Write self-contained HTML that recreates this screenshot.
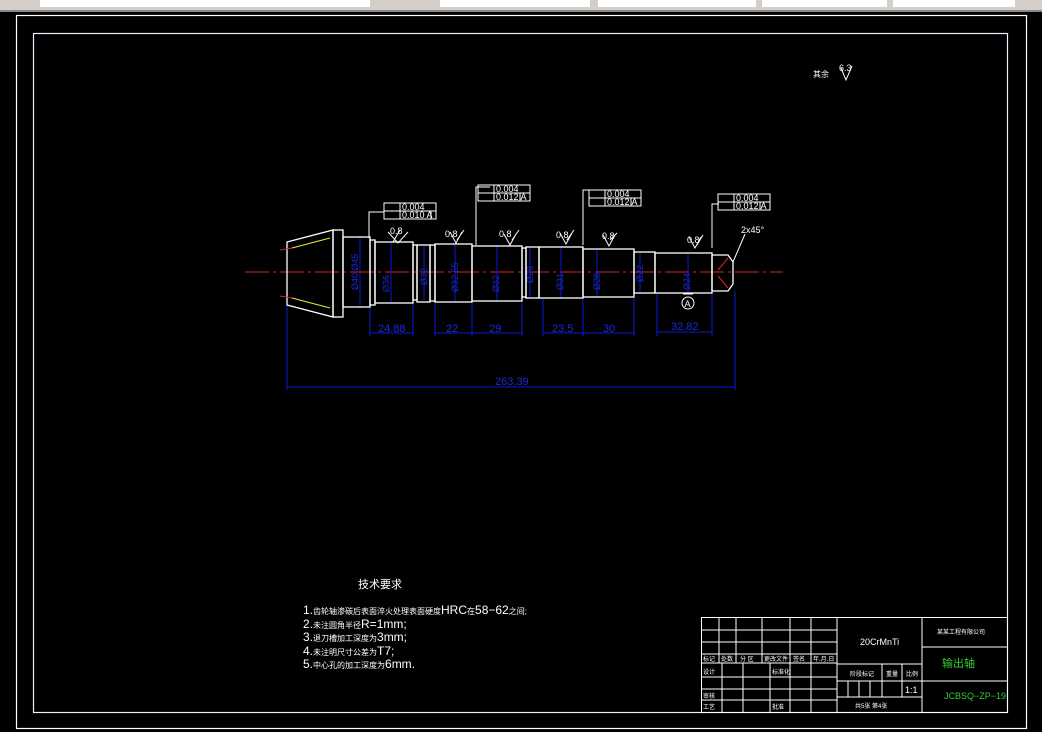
<!DOCTYPE html>
<html><head><meta charset="utf-8"><style>
html,body{margin:0;padding:0;background:#000;width:1042px;height:732px;overflow:hidden}
svg{display:block}
text{font-family:"Liberation Sans","Noto Sans CJK SC",sans-serif}
</style></head><body>
<svg width="1042" height="732" viewBox="0 0 1042 732" xmlns="http://www.w3.org/2000/svg">
<rect width="1042" height="732" fill="#000"/>
<!-- toolbar -->
<rect x="0" y="0" width="1042" height="10" fill="#d4d0c8"/>
<rect x="40" y="0" width="330" height="7" fill="#fff"/>
<rect x="440" y="0" width="150" height="7" fill="#fff"/>
<rect x="598" y="0" width="158" height="7" fill="#fff"/>
<rect x="762" y="0" width="125" height="7" fill="#fff"/>
<rect x="893" y="0" width="122" height="7" fill="#fff"/>
<rect x="0" y="10" width="1042" height="2" fill="#888"/>
<!-- frames -->
<rect x="16.5" y="15.5" width="1010" height="713" fill="none" stroke="#fff" stroke-width="1.2"/>
<rect x="33.5" y="33.5" width="974" height="679" fill="none" stroke="#eef" stroke-width="1.2"/>
<!-- centerline -->
<line x1="245" y1="272" x2="783" y2="272" stroke="#d22" stroke-width="1" stroke-dasharray="24 4 3 4"/>
<g stroke="#0a18d8" stroke-width="1" fill="none">
<path d="M370 306V336M413 303V336M435 302V336M472 302V336M522 301V336M543 298V336M583 298V336M634 297V336M657 293V336M712 293V336M287 305V390M735 291V390"/>
<path d="M370 333H413M435 333H522M543 333H634M657 332H712M287 387H735"/>
<path d="M360 237V307M391 242V303M424 245V300M455 244V302M497 246V301M530 248V297M561 247V298M597 249V297M640 252V293M688 253V293"/>
<path d="M375 242H413M375 303H413M472 246H522M472 301H522M583 249H634M583 297H634M657 253H712M657 293H712"/>
</g>
<g fill="#1a2ad8" font-size="11">
<text x="495" y="385">263.39</text>
<text x="378" y="332">24.88</text>
<text x="446" y="332">22</text>
<text x="489" y="332">29</text>
<text x="552" y="332">23.5</text>
<text x="603" y="332">30</text>
<text x="671" y="330">32.82</text>
</g>
<g fill="#1a2ad8" font-size="9">
<text transform="translate(358 290) rotate(-90)">Ø40 Ø45</text>
<text transform="translate(389 292) rotate(-90)">Ø36</text>
<text transform="translate(427 285) rotate(-90)">Ø32</text>
<text transform="translate(458 292) rotate(-90)">Ø32.55</text>
<text transform="translate(499 292) rotate(-90)">Ø32</text>
<text transform="translate(533 283) rotate(-90)">Ø28</text>
<text transform="translate(563 290) rotate(-90)">Ø31</text>
<text transform="translate(600 290) rotate(-90)">Ø28</text>
<text transform="translate(643 282) rotate(-90)">Ø22</text>
<text transform="translate(690 290) rotate(-90)">Ø24</text>
</g>
<g stroke="#fff" stroke-width="1.3" fill="none">
<path d="M287 242L333 230V317L287 305Z M287 242V305"/>
<rect x="333" y="230" width="10" height="87"/>
<rect x="343" y="237" width="27" height="70"/>
<rect x="370" y="240" width="5" height="65"/>
<rect x="375" y="242" width="38" height="61"/>
<rect x="413" y="245" width="4" height="55"/>
<rect x="417" y="245" width="13" height="57"/>
<rect x="430" y="245" width="5" height="56"/>
<rect x="435" y="244" width="37" height="58"/>
<rect x="472" y="246" width="50" height="55"/>
<rect x="522" y="248" width="4" height="49"/>
<rect x="526" y="247" width="13" height="51"/>
<rect x="539" y="247" width="44" height="51"/>
<rect x="583" y="249" width="51" height="48"/>
<rect x="634" y="252" width="21" height="41"/>
<rect x="655" y="253" width="57" height="40"/>
<path d="M712 255H728L733 262V284L728 291H712Z"/>
</g>
<g stroke="#ee3" stroke-width="1"><path d="M292 248L330 238M292 298L330 308"/></g>
<g stroke="#d22" stroke-width="1"><path d="M280 250L292 248M280 296L292 298M718 270L728 258M718 276L728 288"/></g>
<g stroke="#fff" stroke-width="1" fill="none">
<path d="M369 238V212H384M476 245V187H490M583 245V190H597M712 248V204H719"/>
<rect x="384" y="203" width="52" height="16"/><path d="M384 211H436M400 203V219M431 211V219"/>
<rect x="478" y="185" width="52" height="16"/><path d="M478 193H530M494 185V201M520 193V201"/>
<rect x="589" y="190" width="52" height="16"/><path d="M589 198H641M605 190V206M631 198V206"/>
<rect x="718" y="194" width="52" height="16"/><path d="M718 202H770M734 194V210M760 202V210"/>
<path d="M393 242L400 230M457 240L464 230M512 240L519 230M567 240L574 230M610 240L617 233M697 245L703 235M388 232L398 243L408 232M450 232L456 243L462 232M504 234L510 245L516 234M560 233L566 244L572 233M603 235L609 246L615 235M689 237L695 248L701 237"/>
<path d="M733 262L745 234"/>
<circle cx="688" cy="303" r="6"/><path d="M683 294H693"/>
<path d="M841 68L846 80L852 66"/>
</g>
<text x="684.5" y="307" fill="#fff" font-size="9">A</text>
<g fill="#fff" font-size="9">
<text x="402" y="210">0.004</text><text x="402" y="218">0.010 A</text>
<text x="496" y="192">0.004</text><text x="496" y="200">0.012 A</text>
<text x="607" y="197">0.004</text><text x="607" y="205">0.012 A</text>
<text x="736" y="201">0.004</text><text x="736" y="209">0.012 A</text>
<text x="390" y="234">0.8</text><text x="445" y="237">0.8</text><text x="499" y="237">0.8</text>
<text x="556" y="238">0.8</text><text x="602" y="239">0.8</text><text x="687" y="243">0.8</text>
<text x="741" y="233">2x45°</text>
<text x="839" y="71">6.3</text>
<text x="813" y="77" font-size="8">其余</text>
</g>
<g fill="#fff">
<text x="358" y="588" font-size="11">技术要求</text>
<text x="303" y="614" font-size="12">1.<tspan font-size="8">齿轮轴渗碳后表面淬火处理表面硬度</tspan>HRC<tspan font-size="8">在</tspan>58−62<tspan font-size="8">之间;</tspan></text>
<text x="303" y="628" font-size="12">2.<tspan font-size="8">未注圆角半径</tspan>R=1mm;</text>
<text x="303" y="641" font-size="12">3.<tspan font-size="8">退刀槽加工深度为</tspan>3mm;</text>
<text x="303" y="655" font-size="12">4.<tspan font-size="8">未注明尺寸公差为</tspan>T7;</text>
<text x="303" y="668" font-size="12">5.<tspan font-size="8">中心孔的加工深度为</tspan>6mm.</text>
</g>
<g stroke="#fff" stroke-width="1" fill="none">
<rect x="701.5" y="617.5" width="306" height="95"/>
<path d="M701 630H837M701 642H837M701 654H837M701 663H837M701 677H837M701 689H837M701 700H837"/>
<path d="M719 617V663M736 617V663M762 617V663M790 617V712M811 617V712M837 617V712"/>
<path d="M722 663V712M743 663V712M770 663V712"/>
<path d="M837 664H922M837 681H922M837 697H922M882 664V697M902 664V697M848 681V697M859 681V697M870 681V697M922 617V712M922 647H1007M922 681H1007"/>
</g>
<g fill="#fff" font-size="6">
<text x="703" y="661">标记</text><text x="721" y="661">处数</text><text x="740" y="661">分 区</text><text x="764" y="661">更改文件</text><text x="793" y="661">签名</text><text x="813" y="661">年.月.日</text>
<text x="703" y="674">设计</text><text x="772" y="674">标准化</text><text x="703" y="698">审核</text><text x="703" y="709">工艺</text><text x="772" y="709">批准</text>
<text x="850" y="676">阶段标记</text><text x="886" y="676">重量</text><text x="906" y="676">比例</text>
<text x="855" y="708">共5张 第4张</text>
<text x="937" y="634">某某工程有限公司</text>
</g>
<text x="860" y="645" fill="#fff" font-size="9">20CrMnTi</text>
<text x="905" y="693" fill="#fff" font-size="9">1:1</text>
<text x="942" y="667" fill="#3c3" font-size="11">输出轴</text>
<text x="944" y="699" fill="#3c3" font-size="9">JCBSQ−ZP−19</text>
</svg>
</body></html>
